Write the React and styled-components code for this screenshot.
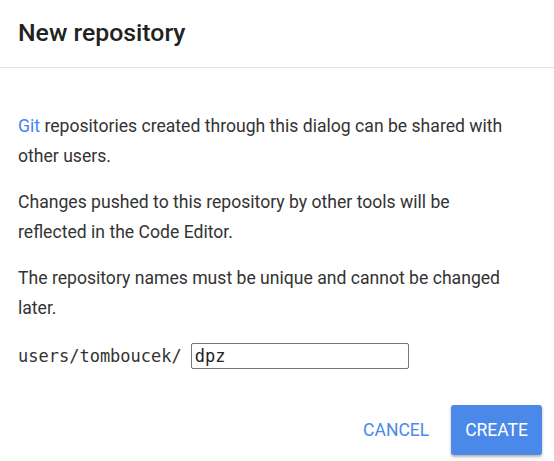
import React from "react";
import styled, { createGlobalStyle } from "styled-components";

const Global = createGlobalStyle`
  html, body {
    margin: 0;
    padding: 0;
    background: #fff;
  }
  body {
    font-family: Roboto, "Liberation Sans", sans-serif;
    color: #333;
  }
`;

const App = () => {
  return (
    <Dialog>
      <Global />
      <Header>
        <Title>New repository</Title>
      </Header>
      <Body>
        <Para>
          <Link href="#">Git</Link> repositories created through this dialog can
          be shared with other users.
        </Para>
        <Para>
          Changes pushed to this repository by other tools will be reflected in
          the Code Editor.
        </Para>
        <Para>
          The repository names must be unique and cannot be changed later.
        </Para>
        <InputRow>
          <Prefix>users/tomboucek/</Prefix>
          <NameInput defaultValue="dpz" />
        </InputRow>
      </Body>
      <Actions>
        <Button>CANCEL</Button>
        <Button $raised>CREATE</Button>
      </Actions>
    </Dialog>
  );
};

export default App;

const Dialog = styled.div`
  width: 554px;
  height: 461px;
  display: flex;
  flex-direction: column;
  background: #fff;
`;

const Header = styled.div`
  height: 68px;
  display: flex;
  align-items: center;
  padding: 0 18px 2px 18px;
  border-bottom: 1px solid #e3e3e3;
  box-sizing: border-box;
`;

const Title = styled.h2`
  margin: 0;
  font-size: 24.8px;
  font-weight: 500;
  color: #222;
`;

const Body = styled.div`
  padding: 43px 18px 0 18px;
  width: 498px;
`;

const Para = styled.p`
  margin: 0 0 16px 0;
  font-size: 17.6px;
  line-height: 30px;
  color: #333;
`;

const Link = styled.a`
  color: #4285f4;
  text-decoration: none;
`;

const InputRow = styled.div`
  display: flex;
  align-items: center;
  gap: 9px;
  margin-top: 20px;
`;

const Prefix = styled.span`
  font-family: "DejaVu Sans Mono", monospace;
  font-size: 17px;
  color: #333;
`;

const NameInput = styled.input`
  width: 218px;
  height: 26px;
  box-sizing: border-box;
  border: 1px solid #767676;
  border-radius: 2px;
  padding: 0 3px;
  font-family: "DejaVu Sans Mono", monospace;
  font-size: 17px;
  color: #222;
  outline: none;
`;

const Actions = styled.div`
  display: flex;
  justify-content: flex-end;
  align-items: center;
  gap: 4px;
  padding: 0 12px 0 0;
  margin-top: 36px;
`;

const Button = styled.button`
  font-family: Roboto, "Liberation Sans", sans-serif;
  font-size: 17.5px;
  font-weight: 400;
  height: 50px;
  min-width: 90px;
  padding: 0 ${(p) => (p.$raised ? "14px" : "18px")};
  border: none;
  border-radius: 3px;
  cursor: pointer;
  background: ${(p) => (p.$raised ? "#4a89ea" : "transparent")};
  color: ${(p) => (p.$raised ? "#fff" : "#4a89ea")};
  box-shadow: ${(p) =>
    p.$raised ? "0 2px 3px rgba(0,0,0,0.3)" : "none"};
`;
